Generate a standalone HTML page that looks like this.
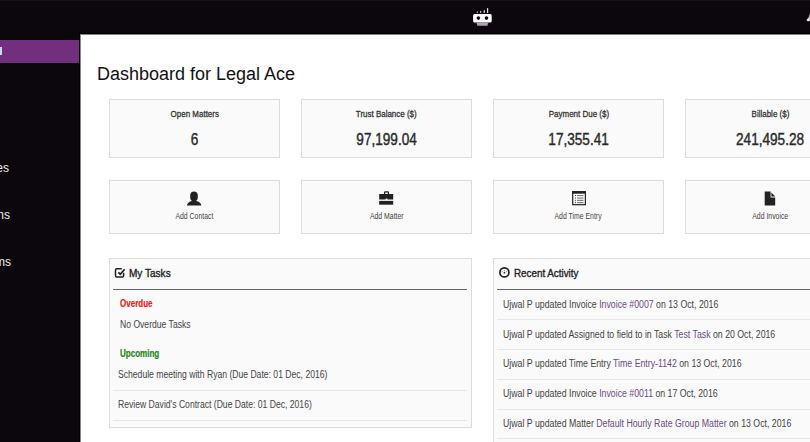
<!DOCTYPE html>
<html><head><meta charset="utf-8">
<style>
*{box-sizing:border-box;margin:0;padding:0}
html,body{width:810px;height:442px;overflow:hidden;background:#fff;font-family:"Liberation Sans",sans-serif;color:#333}
.abs{position:absolute}
#hdr{position:absolute;left:0;top:0;width:810px;height:34px;background:#0c070d;border-top:1px solid #16121a}
#hl{position:absolute;left:79px;top:33px;width:731px;height:1px;background:#000}
#hdr:after{content:"";position:absolute;left:80px;right:0;bottom:-1px;height:1px;background:#808080}
#vl{position:absolute;left:79px;top:33px;width:1px;height:409px;background:#000}
#vl2{position:absolute;left:80px;top:34px;width:1px;height:408px;background:#8a8a8a}
#side{position:absolute;left:0;top:34px;width:80px;height:408px;background:#0c070d}
#act{position:absolute;left:0;top:40px;width:80px;height:23px;background:#722f7e}
.st{position:absolute;color:#eee;font-size:12px;white-space:nowrap;transform-origin:right top}
.title{position:absolute;left:97px;top:64px;font-size:18px;color:#111;white-space:nowrap}
.card{position:absolute;background:#fafafa;border:1px solid #dcdcdc}
.sq{position:absolute;white-space:nowrap;display:inline-block}
.ctr{position:absolute;width:171px;text-align:center;white-space:nowrap;line-height:1}
.ctr span{display:table;margin:0 auto;transform-origin:center top}
.lbl{transform:scaleX(.84);font-size:9.5px;font-weight:normal;color:#333;-webkit-text-stroke:.3px #333}
.val{transform:scaleX(.85);font-size:16px;font-weight:normal;color:#2a2a2a;-webkit-text-stroke:.4px #2a2a2a}
.sub{transform:scaleX(.81);font-size:8.5px;color:#444}
.panel{position:absolute;background:#fafafa;border:1px solid #dcdcdc}
.ph{position:absolute;font-size:10.8px;line-height:1;font-weight:normal;color:#222;-webkit-text-stroke:.35px #222;white-space:nowrap}
.line{position:absolute;height:1px}
.t{position:absolute;font-size:10px;line-height:1;color:#444;white-space:nowrap}
.t>span{display:inline-block;transform-origin:left top;transform:scaleX(.86)}
.t.a>span{transform:scaleX(.875)}
.t.b{font-weight:bold;font-size:10.3px;-webkit-text-stroke:.2px currentColor}
.t.b>span{transform:scaleX(.78)}
.ph>span{display:inline-block;transform-origin:left top;transform:scaleX(.93)}
.lk{color:#6b4a88}
</style></head>
<body>
<div id="hdr"></div>
<div id="side"></div>
<div id="act"></div>
<div id="hl"></div><div id="vl"></div><div id="vl2"></div>
<div style="position:absolute;left:0;top:47px;width:2px;height:8px;background:#cfd8ea"></div>
<div class="st" style="right:801px;top:161px">Matters &amp; Invoices</div>
<div class="st" style="right:800px;top:208px">Communications</div>
<div class="st" style="right:799px;top:255px">Forms</div>

<!-- robot icon -->
<svg class="abs" style="left:470px;top:5px" width="26" height="24" viewBox="0 0 26 24">
  <rect x="3.1" y="9.1" width="18.6" height="8.5" rx="1.6" fill="#fff"/>
  <circle cx="8.4" cy="13.1" r="1.8" fill="#0c070d"/>
  <circle cx="16.5" cy="13.1" r="1.8" fill="#0c070d"/>
  <path d="M6.4 17.5H18.3L17.4 20.8H7.4Z" fill="#a8a8a8"/>
  <rect x="6.8" y="6.3" width="1.1" height="1.6" rx=".5" fill="#bbb"/>
  <rect x="10.1" y="5.8" width="1.1" height="2.1" rx=".5" fill="#c8c8c8"/>
  <path d="M13.6 7.9V5.6L14.8 4.8V7.9Z" fill="#d8d8d8"/>
  <rect x="17" y="2.9" width="1.2" height="5" rx=".5" fill="#e6e6e6"/>
</svg>
<svg class="abs" style="left:804px;top:13px" width="6" height="10" viewBox="0 0 6 10"><path d="M5.6 0.6L4.6 4.5L2.6 6.8L2.9 8.1L6 8.3Z" fill="#dde4f0"/></svg>

<div class="title">Dashboard for Legal Ace</div>

<!-- stat cards -->
<div class="card" style="left:109px;top:99px;width:171px;height:59px"></div>
<div class="card" style="left:301px;top:99px;width:171px;height:59px"></div>
<div class="card" style="left:493px;top:99px;width:171px;height:59px"></div>
<div class="card" style="left:685px;top:99px;width:171px;height:59px"></div>

<div class="card" style="left:109px;top:180px;width:171px;height:54px"></div>
<div class="card" style="left:301px;top:180px;width:171px;height:54px"></div>
<div class="card" style="left:493px;top:180px;width:171px;height:54px"></div>
<div class="card" style="left:685px;top:180px;width:171px;height:54px"></div>

<div class="ctr" style="left:109px;top:109px"><span class="lbl">Open Matters</span></div>
<div class="ctr" style="left:109px;top:132px"><span class="val">6</span></div>
<div class="ctr" style="left:109px;top:212.2px"><span class="sub">Add Contact</span></div>
<div class="ctr" style="left:301px;top:109px"><span class="lbl">Trust Balance ($)</span></div>
<div class="ctr" style="left:301px;top:132px"><span class="val">97,199.04</span></div>
<div class="ctr" style="left:301px;top:212.2px"><span class="sub">Add Matter</span></div>
<div class="ctr" style="left:493px;top:109px"><span class="lbl">Payment Due ($)</span></div>
<div class="ctr" style="left:493px;top:132px"><span class="val">17,355.41</span></div>
<div class="ctr" style="left:493px;top:212.2px"><span class="sub">Add Time Entry</span></div>
<div class="ctr" style="left:685px;top:109px"><span class="lbl">Billable ($)</span></div>
<div class="ctr" style="left:685px;top:132px"><span class="val">241,495.28</span></div>
<div class="ctr" style="left:685px;top:212.2px"><span class="sub">Add Invoice</span></div>
<!-- panels -->
<div class="panel" style="left:109px;top:258px;width:363px;height:170px"></div>
<div class="panel" style="left:493px;top:258px;width:363px;height:200px"></div>


<!-- action icons -->
<svg class="abs" style="left:186px;top:190px" width="16" height="16" viewBox="0 0 16 16"><path d="M8 1.4C10.3 1.4 11.8 3 11.8 5.2V7.5C11.8 9 11 10 10.4 10.5V11.1C12.6 11.7 15 13 15.4 15.4H0.9C1.3 13 3.6 11.7 5.6 11.1V10.5C5 10 4.2 9 4.2 7.5V5.2C4.2 3 5.7 1.4 8 1.4Z" fill="#222"/></svg>
<svg class="abs" style="left:378px;top:190px" width="18" height="16" viewBox="0 0 18 16"><path d="M6.6 4.2V2.6Q6.6 1.9 7.3 1.9H9.7Q10.4 1.9 10.4 2.6V4.2" fill="none" stroke="#222" stroke-width="1.3"/><path d="M1.2 3.9H15.2V9.5H9.6A1.1 1.1 0 0 0 7.4 9.5H1.2Z" fill="#222"/><rect x="1.2" y="10.9" width="14" height="3.8" fill="#222"/></svg>
<svg class="abs" style="left:571px;top:190px" width="16" height="16" viewBox="0 0 16 16"><rect x="1.7" y="1.7" width="12.7" height="13" fill="none" stroke="#222" stroke-width="1.2"/><rect x="1.2" y="1.2" width="13.7" height="2.5" fill="#222"/><g fill="#444"><rect x="4" y="5" width="1" height="1"/><rect x="4" y="7.5" width="1" height="1"/><rect x="4" y="9.8" width="1" height="1"/><rect x="4" y="12.1" width="1" height="1"/></g><g fill="#777"><rect x="6" y="5" width="6.5" height="1.1"/><rect x="6" y="7.5" width="6.5" height="1.1"/><rect x="6" y="9.8" width="6.5" height="1.1"/><rect x="6" y="12.1" width="6.5" height="1.1"/></g></svg>
<svg class="abs" style="left:762px;top:190px" width="16" height="16" viewBox="0 0 16 16"><path d="M2.7 1.4H8.6V7.5H13.2V15.4H2.7Z" fill="#222"/><path d="M9.4 2.5L13.2 6.5H9.4Z" fill="#222"/></svg>

<!-- tasks panel -->
<svg class="abs" style="left:113px;top:266px" width="14" height="14" viewBox="0 0 14 14"><path d="M10.6 6.8V9.8Q10.6 10.9 9.5 10.9H3.6Q2.5 10.9 2.5 9.8V3.9Q2.5 2.8 3.6 2.8H8.8" fill="none" stroke="#222" stroke-width="1.5"/><path d="M5.3 6.3L7.3 8.2L11.6 3.3" fill="none" stroke="#222" stroke-width="1.7"/></svg>
<div class="ph" style="left:129px;top:268px"><span>My Tasks</span></div>
<div class="line" style="left:113px;top:289px;width:354px;background:#666;height:1.3px"></div>
<div class="t b" style="left:120px;top:298.6px;color:#ee1c1c"><span>Overdue</span></div>
<div class="t" style="left:120px;top:319.5px"><span>No Overdue Tasks</span></div>
<div class="t b" style="left:120px;top:348.6px;color:#268526"><span>Upcoming</span></div>
<div class="t" style="left:118px;top:370px"><span>Schedule meeting with Ryan (Due Date: 01 Dec, 2016)</span></div>
<div class="line" style="left:113px;top:390px;width:354px;background:#e6e6e6"></div>
<div class="t" style="left:118px;top:400.2px"><span>Review David's Contract (Due Date: 01 Dec, 2016)</span></div>
<div class="line" style="left:113px;top:419.5px;width:354px;background:#e6e6e6"></div>

<!-- activity panel -->
<svg class="abs" style="left:497px;top:266px" width="14" height="14" viewBox="0 0 14 14"><circle cx="7.4" cy="6.4" r="4.5" fill="none" stroke="#222" stroke-width="1.7"/><circle cx="7.4" cy="6.7" r="0.85" fill="#222"/><path d="M5.2 4.8V6.2M9.6 4.8V6.2M7.4 4V4.9" stroke="#8a8a8a" stroke-width="0.8"/></svg>
<div class="ph" style="left:514px;top:268px"><span style="transform:scaleX(.91)">Recent Activity</span></div>
<div class="line" style="left:497px;top:289px;width:360px;background:#666;height:1.3px"></div>
<div class="t a" style="left:503px;top:299.8px"><span>Ujwal P updated Invoice <span class="lk">Invoice #0007</span> on 13 Oct, 2016</span></div>
<div class="line" style="left:497px;top:319.2px;width:360px;background:#e6e6e6"></div>
<div class="t a" style="left:503px;top:329.6px"><span>Ujwal P updated Assigned to field to in Task <span class="lk">Test Task</span> on 20 Oct, 2016</span></div>
<div class="line" style="left:497px;top:349.0px;width:360px;background:#e6e6e6"></div>
<div class="t a" style="left:503px;top:359.4px"><span>Ujwal P updated Time Entry <span class="lk">Time Entry-1142</span> on 13 Oct, 2016</span></div>
<div class="line" style="left:497px;top:378.8px;width:360px;background:#e6e6e6"></div>
<div class="t a" style="left:503px;top:389.2px"><span>Ujwal P updated Invoice <span class="lk">Invoice #0011</span> on 17 Oct, 2016</span></div>
<div class="line" style="left:497px;top:408.6px;width:360px;background:#e6e6e6"></div>
<div class="t a" style="left:503px;top:419.0px"><span>Ujwal P updated Matter <span class="lk">Default Hourly Rate Group Matter</span> on 13 Oct, 2016</span></div>
<div class="line" style="left:497px;top:438.4px;width:360px;background:#e6e6e6"></div>
</body></html>
